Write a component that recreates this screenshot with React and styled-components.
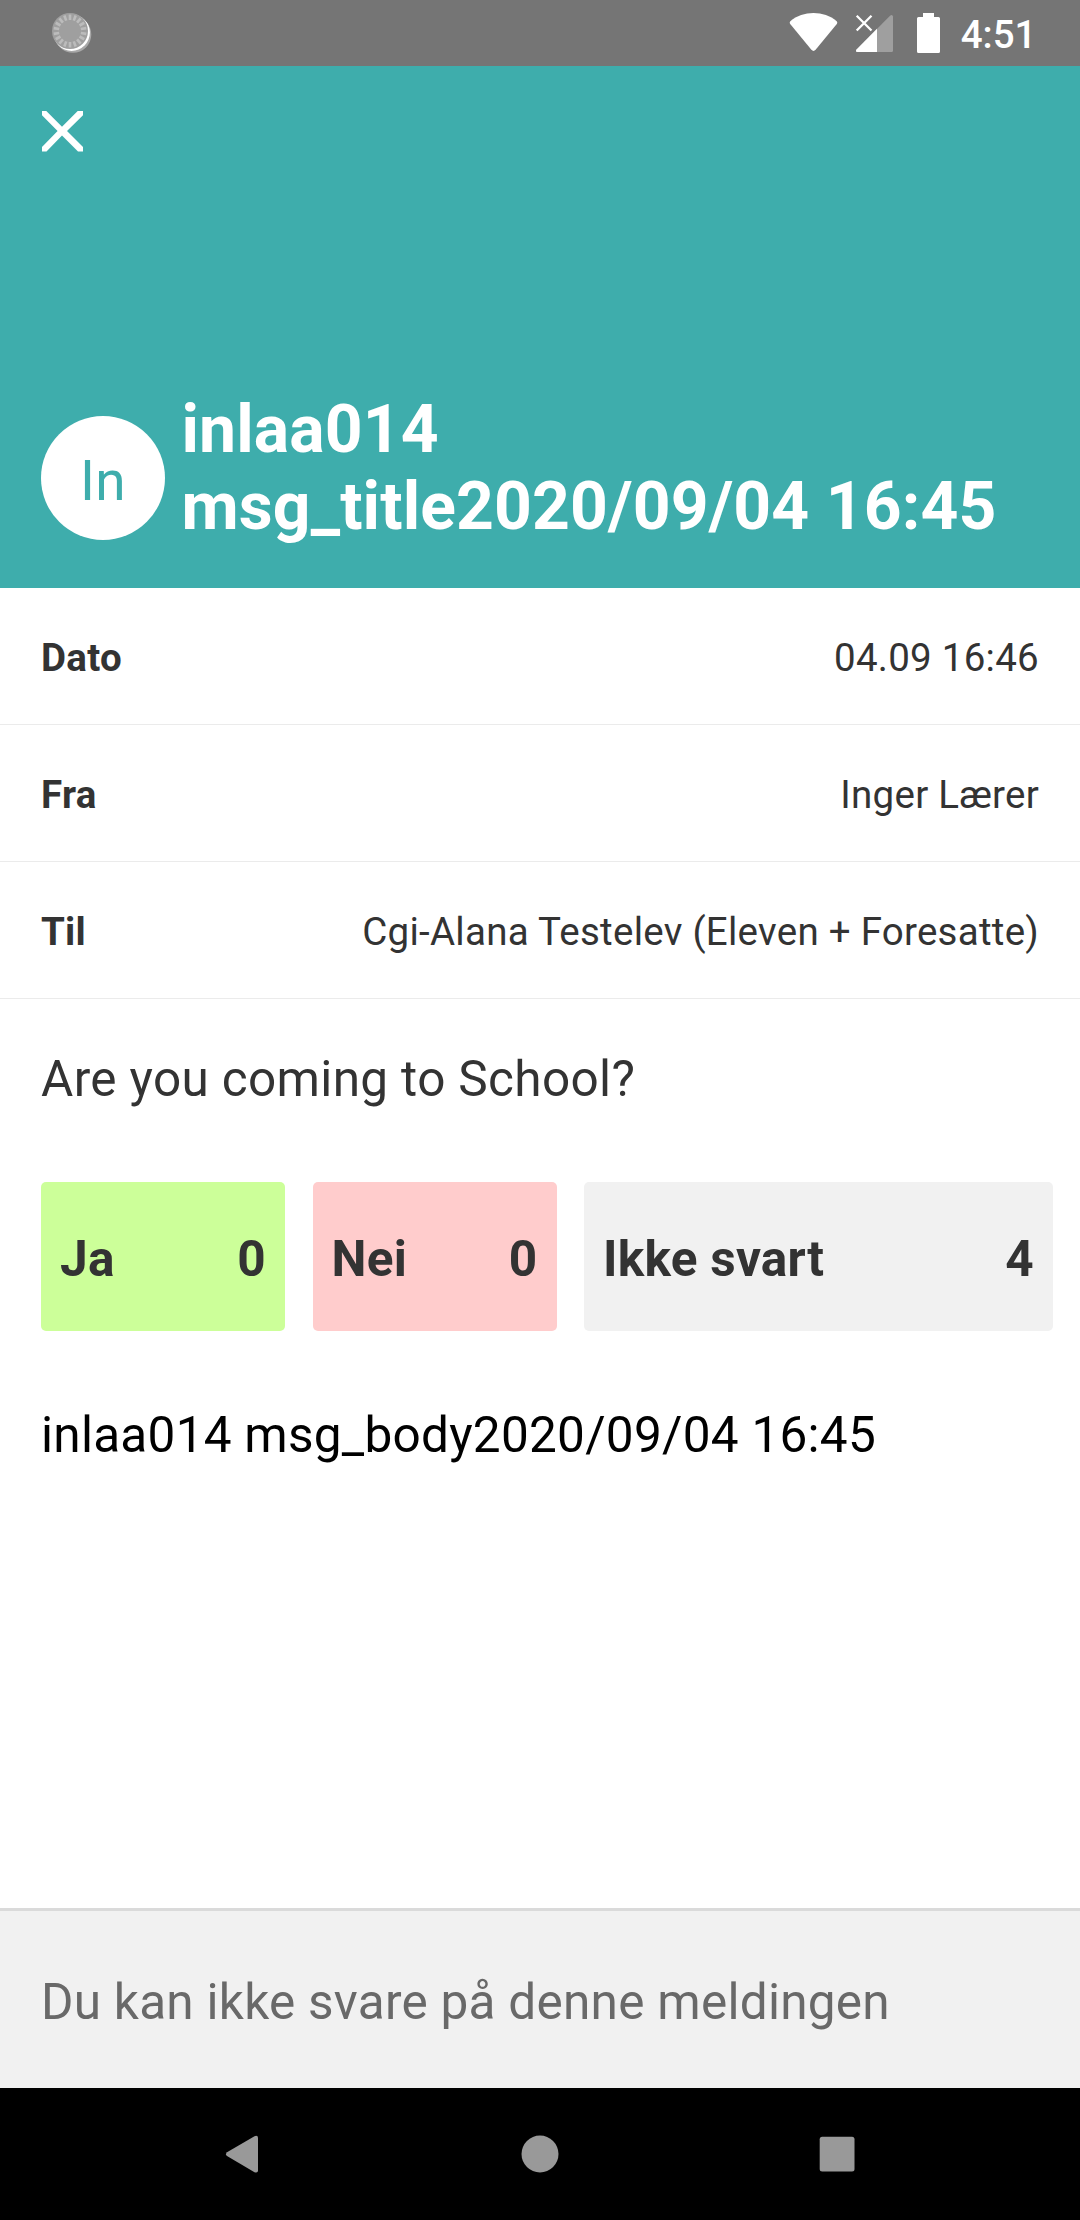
import React from 'react';
import styled, { createGlobalStyle } from 'styled-components';

const GlobalStyle = createGlobalStyle`
  * { box-sizing: border-box; }
  body { margin: 0; background: #fff; }
`;

const Screen = styled.div`
  width: 1080px;
  height: 2220px;
  display: flex;
  flex-direction: column;
  background: #fff;
  color: #333;
  font-family: Roboto, sans-serif;
  font-size: 49.5px;
  line-height: 58px;
  letter-spacing: 0.26px;
  overflow: hidden;
`;

const StatusBar = styled.div`
  flex: 0 0 66px;
  display: flex;
  align-items: center;
  justify-content: space-between;
  padding: 0 43.5px 0 50px;
  background: #757575;
`;

const StatusIcons = styled.div`
  display: flex;
  align-items: center;
`;

const Clock = styled.span`
  margin-left: 20px;
  padding-top: 4px;
  color: #fff;
  font-size: 38.5px;
  font-weight: 500;
  line-height: 46px;
  letter-spacing: 0;
`;

const Icon = styled.svg`
  display: block;
  flex: none;
  margin-left: ${(p) => p.$gap || 0}px;
`;

const Header = styled.header`
  flex: 0 0 522px;
  display: flex;
  flex-direction: column;
  justify-content: space-between;
  padding: 44px 41px 43px;
  background: #3eadac;
`;

const CloseButton = styled.button`
  width: 42px;
  height: 42px;
  padding: 0;
  border: 0;
  background: none;
`;

const Heading = styled.div`
  display: flex;
  align-items: center;
  gap: 16.5px;
`;

const Avatar = styled.div`
  flex: none;
  width: 124px;
  height: 124px;
  margin-top: 20px;
  padding-top: 6px;
  display: flex;
  align-items: center;
  justify-content: center;
  border-radius: 50%;
  background: #fff;
  color: #3eadac;
  font-size: 55px;
`;

const Title = styled.h1`
  margin: 0;
  color: #fff;
  font-size: 66px;
  font-weight: 700;
  line-height: 77px;
  letter-spacing: 0.13px;
`;

const Row = styled.div`
  flex: 0 0 137px;
  display: flex;
  align-items: center;
  justify-content: space-between;
  padding: 3px 41px 0;
  border-bottom: 1px solid #ebebeb;
  font-size: 38.5px;
  line-height: 46px;
`;

const Label = styled.span`
  font-weight: 700;
`;

const Question = styled.p`
  margin: 51px 41px 74px;
  letter-spacing: 0.34px;
`;

const Answers = styled.div`
  display: grid;
  grid-template-columns: 244px 244px 469px;
  column-gap: 27.5px;
  margin-left: 41px;
`;

const Answer = styled.div`
  height: 149px;
  display: flex;
  align-items: center;
  justify-content: space-between;
  padding: 5px 19px 0;
  border-radius: 5px;
  background: ${(p) => p.$tone};
  font-weight: 700;
`;

const Body = styled.p`
  flex: 1;
  margin: 75px 41px 0;
  color: #000;
`;

const Footer = styled.footer`
  flex: 0 0 180px;
  display: flex;
  align-items: center;
  padding: 5px 41px 0;
  border-top: 3px solid #dadada;
  background: #f1f1f1;
  color: #696969;
`;

const NavBar = styled.nav`
  flex: 0 0 132px;
  display: flex;
  align-items: center;
  justify-content: space-between;
  padding: 0 223px;
  background: #000;
`;

const TICKS = Array.from({ length: 18 }, (_, i) => i * 20);

function SpinnerIcon() {
  return (
    <Icon width="44" height="44" viewBox="50 11 44 44">
      <circle cx="73" cy="34.5" r="18.3" fill="#a8a8a8" />
      <circle cx="71.6" cy="32.6" r="18.3" fill="#fff" />
      <circle cx="70" cy="31" r="18" fill="#9f9f9f" />
      {TICKS.map((a) => (
        <rect key={a} x="68.7" y="14.500" width="2.600" height="5.500" fill="#bcbcbc" transform={`rotate(${a} 70 31)`} />
      ))}
    </Icon>
  );
}

function WifiIcon() {
  return (
    <Icon width="50" height="42" viewBox="787 12 50 42">
      <path d="M789.3 21.2C802 10.400 823 10.400 835.700 21.200Q836.800 22.400 835.800 24L814.600 49.800Q812.500 52 810.400 49.800L789.200 24Q788.200 22.400 789.300 21.200Z" fill="#fff" />
    </Icon>
  );
}

function SignalIcon() {
  return (
    <Icon width="42" height="42" viewBox="852 12 42 42" $gap={15}>
      <path d="M890.500 52Q892 52 892 50.500V16.500Q891.500 14 889.300 15.400L855.500 49.500Q854 52 856.500 52Z" fill="#9f9f9f" />
      <path d="M876 28.800L855.500 49.500Q854 52 856.500 52H876Z" fill="#fff" />
      <path d="M855.700 15.700L870.500 30.500M870.500 15.700L855.700 30.500" stroke="#fff" strokeWidth="2.300" />
    </Icon>
  );
}

function BatteryIcon() {
  return (
    <Icon width="25" height="42" viewBox="915 12 25 42" $gap={21}>
      <path d="M922 13H933V17H937.500Q939 17 939 18.500V51.500Q939 53 937.500 53H917.500Q916 53 916 51.500V18.500Q916 17 917.500 17H922Z" fill="#fff" />
    </Icon>
  );
}

const ROWS = [
  ['Dato', '04.09 16:46'],
  ['Fra', 'Inger Lærer'],
  ['Til', 'Cgi-Alana Testelev (Eleven + Foresatte)'],
];

const ANSWERS = [
  ['Ja', 0, '#ccff99'],
  ['Nei', 0, '#ffcccc'],
  ['Ikke svart', 4, '#f1f1f1'],
];

export default function App() {
  return (
    <Screen>
      <GlobalStyle />
      <StatusBar>
        <SpinnerIcon />
        <StatusIcons>
          <WifiIcon />
          <SignalIcon />
          <BatteryIcon />
          <Clock>4:51</Clock>
        </StatusIcons>
      </StatusBar>
      <Header>
        <CloseButton aria-label="Lukk">
          <Icon width="42" height="42" viewBox="0 0 42 42">
            <path d="M1 1H5.300L21 16.700L36.700 1H42V5.300L26 21L42 37V41.500H37L21 25.500L5.500 41.500H1V37L16.600 21L1 5.300Z" fill="#fff" />
          </Icon>
        </CloseButton>
        <Heading>
          <Avatar>In</Avatar>
          <Title>inlaa014<br />msg_title2020/09/04 16:45</Title>
        </Heading>
      </Header>
      {ROWS.map(([label, value]) => (
        <Row key={label}>
          <Label>{label}</Label>
          <span>{value}</span>
        </Row>
      ))}
      <Question>Are you coming to School?</Question>
      <Answers>
        {ANSWERS.map(([label, count, tone]) => (
          <Answer key={label} $tone={tone}>
            <span>{label}</span>
            <span>{count}</span>
          </Answer>
        ))}
      </Answers>
      <Body>inlaa014 msg_body2020/09/04 16:45</Body>
      <Footer>Du kan ikke svare på denne meldingen</Footer>
      <NavBar>
        <Icon width="40" height="40" viewBox="223 2134 40 40">
          <path d="M227 2152.300L254.500 2136.200Q258 2135 258 2138V2170.500Q258 2173.300 254.500 2172.200L227 2156Q225 2154.200 227 2152.300Z" fill="#999" />
        </Icon>
        <Icon width="40" height="40" viewBox="0 0 40 40">
          <circle cx="20" cy="20" r="18.500" fill="#999" />
        </Icon>
        <Icon width="40" height="40" viewBox="817 2134 40 40">
          <rect x="819.700" y="2136.700" width="34.800" height="34.800" rx="2.500" fill="#999" />
        </Icon>
      </NavBar>
    </Screen>
  );
}
